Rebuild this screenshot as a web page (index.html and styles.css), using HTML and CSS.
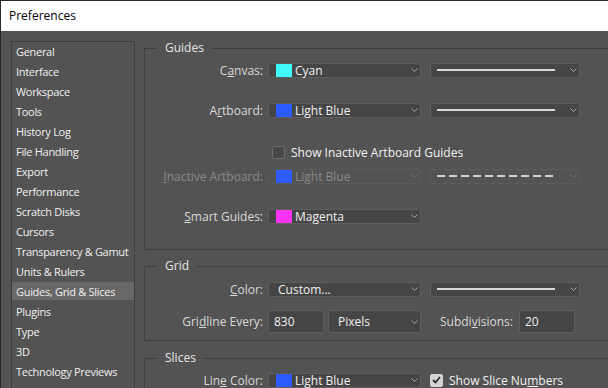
FILE: index.html
```html
<!DOCTYPE html>
<html lang="en">
<head>
  <meta charset="UTF-8" />
  <title>Preferences</title>
  <link rel="stylesheet" href="styles.css">
</head>
<body>
  <div class="window">
    <header class="titlebar">Preferences</header>
    <div class="dialog">
      <ul class="nav">
        <li>General</li>
        <li>Interface</li>
        <li>Workspace</li>
        <li>Tools</li>
        <li>History Log</li>
        <li>File Handling</li>
        <li>Export</li>
        <li>Performance</li>
        <li>Scratch Disks</li>
        <li>Cursors</li>
        <li>Transparency &amp; Gamut</li>
        <li>Units &amp; Rulers</li>
        <li class="active">Guides, Grid &amp; Slices</li>
        <li>Plugins</li>
        <li>Type</li>
        <li>3D</li>
        <li>Technology Previews</li>
        <li>Product Improvement</li>
      </ul>

      <div class="panel">
        <fieldset class="group group-guides">
          <legend>Guides</legend>
          <div class="row row-first">
            <span class="field-label">C<u>a</u>nvas:</span>
            <div class="select">
              <span class="swatch swatch-cyan"></span>
              <span class="select-text">Cyan</span>
              <svg class="chevron" width="7" height="4" viewBox="0 0 7 4"><path d="M0.5 0.5 L3.5 3.5 L6.5 0.5" /></svg>
            </div>
            <div class="select select-line">
              <span class="line"></span>
              <svg class="chevron" width="7" height="4" viewBox="0 0 7 4"><path d="M0.5 0.5 L3.5 3.5 L6.5 0.5" /></svg>
            </div>
          </div>
          <div class="row">
            <span class="field-label">A<u>r</u>tboard:</span>
            <div class="select">
              <span class="swatch swatch-blue"></span>
              <span class="select-text">Light Blue</span>
              <svg class="chevron" width="7" height="4" viewBox="0 0 7 4"><path d="M0.5 0.5 L3.5 3.5 L6.5 0.5" /></svg>
            </div>
            <div class="select select-line">
              <span class="line"></span>
              <svg class="chevron" width="7" height="4" viewBox="0 0 7 4"><path d="M0.5 0.5 L3.5 3.5 L6.5 0.5" /></svg>
            </div>
          </div>
          <div class="row row-check">
            <span class="checkbox"></span>
            <span class="check-text">Show Inactive Artboard Guides</span>
          </div>
          <div class="row row-tight disabled">
            <span class="field-label"><u>I</u>nactive Artboard:</span>
            <div class="select">
              <span class="swatch swatch-blue"></span>
              <span class="select-text">Light Blue</span>
              <svg class="chevron" width="7" height="4" viewBox="0 0 7 4"><path d="M0.5 0.5 L3.5 3.5 L6.5 0.5" /></svg>
            </div>
            <div class="select select-line">
              <span class="line line-dashed"></span>
              <svg class="chevron" width="7" height="4" viewBox="0 0 7 4"><path d="M0.5 0.5 L3.5 3.5 L6.5 0.5" /></svg>
            </div>
          </div>
          <div class="row">
            <span class="field-label"><u>S</u>mart Guides:</span>
            <div class="select">
              <span class="swatch swatch-magenta"></span>
              <span class="select-text">Magenta</span>
              <svg class="chevron" width="7" height="4" viewBox="0 0 7 4"><path d="M0.5 0.5 L3.5 3.5 L6.5 0.5" /></svg>
            </div>
          </div>
        </fieldset>

        <fieldset class="group group-grid">
          <legend>Grid</legend>
          <div class="row row-first">
            <span class="field-label"><u>C</u>olor:</span>
            <div class="select select-plain">
              <span class="select-text">Custom...</span>
              <svg class="chevron" width="7" height="4" viewBox="0 0 7 4"><path d="M0.5 0.5 L3.5 3.5 L6.5 0.5" /></svg>
            </div>
            <div class="select select-line">
              <span class="line"></span>
              <svg class="chevron" width="7" height="4" viewBox="0 0 7 4"><path d="M0.5 0.5 L3.5 3.5 L6.5 0.5" /></svg>
            </div>
          </div>
          <div class="row row-tall">
            <span class="field-label">Gri<u>d</u>line Every:</span>
            <span class="input">830</span>
            <div class="select select-units">
              <span class="select-text">Pixels</span>
              <svg class="chevron" width="7" height="4" viewBox="0 0 7 4"><path d="M0.5 0.5 L3.5 3.5 L6.5 0.5" /></svg>
            </div>
            <span class="sub-label">Subdi<u>v</u>isions:</span>
            <span class="input">20</span>
          </div>
        </fieldset>

        <fieldset class="group group-slices">
          <legend>Slices</legend>
          <div class="row row-first">
            <span class="field-label">Lin<u>e</u> Color:</span>
            <div class="select">
              <span class="swatch swatch-blue"></span>
              <span class="select-text">Light Blue</span>
              <svg class="chevron" width="7" height="4" viewBox="0 0 7 4"><path d="M0.5 0.5 L3.5 3.5 L6.5 0.5" /></svg>
            </div>
            <span class="checkbox checked">
              <svg width="9" height="8" viewBox="0 0 9 8"><path d="M1 4 L3.5 6.5 L8 1" /></svg>
            </span>
            <span class="check-text">Show Slice Nu<u>m</u>bers</span>
          </div>
        </fieldset>
      </div>
    </div>
  </div>
</body>
</html>
```

FILE: styles.css
```css
body {
  margin: 0;
  background: #535353;
  font-family: "Open Sans", "Liberation Sans", sans-serif;
  font-size: 12px;
  color: #d8d8d8;
  overflow: hidden;
}

.window {
  height: 387px;
  border-top: 1px solid #2b2b2b;
  border-left: 1px solid #2b2b2b;
}

.titlebar {
  height: 30px;
  line-height: 30px;
  padding-left: 8px;
  background: #fff;
  color: #000;
  font-size: 12px;
}

.dialog {
  display: flex;
  gap: 9px;
  padding: 10px 0 0 10px;
}

/* left list */
.nav {
  flex: none;
  width: 124px;
  height: 400px;
  margin: 0;
  padding: 0;
  list-style: none;
  box-sizing: border-box;
  border: 1px solid #3e3e3e;
}

.nav li {
  height: 17px;
  line-height: 18px;
  margin-bottom: 2px;
  padding: 1px 0 0 4px;
  font-size: 11px;
  letter-spacing: -0.3px;
  color: #f0f0f0;
  white-space: nowrap;
}

.nav li.active {
  background: #686868;
}

/* right panel */
.panel {
  flex: none;
  width: 480px;
}

.group {
  margin: 0;
  padding: 0;
  min-width: 0;
  border: 1px solid #3f3f3f;
}

.group legend {
  margin-left: 12px;
  padding: 0 8px;
  line-height: 14px;
  color: #e4e4e4;
}

.group-guides {
  padding-bottom: 23px;
  margin-bottom: 9px;
}

.group-grid {
  padding-bottom: 7px;
  margin-bottom: 10px;
}

.row {
  display: flex;
  align-items: center;
  height: 20px;
  margin-top: 20px;
}

.row-first {
  margin-top: 5px;
}

.group-grid .row-first {
  margin-top: 6px;
}

.row-check {
  margin-top: 22px;
  padding-left: 127px;
}

.row-tight {
  margin-top: 4px;
}

.row-tall {
  height: 23px;
  margin-top: 11px;
}

.field-label {
  width: 118px;
  margin-right: 5px;
  text-align: right;
  white-space: nowrap;
}

.select {
  display: flex;
  align-items: center;
  width: 153px;
  height: 15px;
  box-sizing: border-box;
  padding-left: 7px;
  background: #454545;
  border: 1px solid #5e5e5e;
  border-radius: 3px;
}

.select-plain {
  padding-left: 9px;
}

.select-line {
  width: 150px;
  margin-left: 9px;
  padding-left: 6px;
}

.select-units {
  width: 93px;
  height: 23px;
  margin-left: 4px;
  padding-left: 9px;
}

.select-text {
  color: #f0f0f0;
  white-space: nowrap;
}

.chevron {
  flex: none;
  margin-left: auto;
  margin-right: 2px;
}

.chevron path {
  fill: none;
  stroke: #a4a4a4;
  stroke-width: 1;
}

.swatch {
  flex: none;
  width: 16px;
  height: 13px;
  margin-right: 3px;
}

.swatch-cyan {
  background: #3ff8f8;
}

.swatch-blue {
  background: #2c5cff;
}

.swatch-magenta {
  background: #fd34f6;
}

.line {
  width: 118px;
  height: 2px;
  background: #d6d6d6;
}

.line-dashed {
  background: repeating-linear-gradient(90deg, #d2d2d2 0 8px, transparent 8px 12px);
}

.disabled .field-label,
.disabled .select-text {
  color: #8a8a8a;
}

.disabled .select {
  background: transparent;
  border-color: #5a5a5a;
}

.disabled .chevron path {
  stroke: #6e6e6e;
}

.checkbox {
  flex: none;
  width: 13px;
  height: 13px;
  box-sizing: border-box;
  margin-right: 6px;
  background: #474747;
  border: 1px solid #6c6c6c;
  border-radius: 2px;
}

.checkbox.checked {
  display: flex;
  align-items: center;
  justify-content: center;
  margin-left: 9px;
  background: #d4d4d4;
  border-color: #d4d4d4;
}

.checkbox.checked path {
  fill: none;
  stroke: #303030;
  stroke-width: 1.8;
}

.check-text {
  color: #f2f2f2;
  white-space: nowrap;
}

.input {
  width: 56px;
  height: 23px;
  box-sizing: border-box;
  padding-left: 5px;
  line-height: 21px;
  background: #454545;
  border: 1px solid #5e5e5e;
  border-radius: 1px;
  color: #f0f0f0;
}

.sub-label {
  margin-left: 19px;
  margin-right: 6px;
  white-space: nowrap;
}
```
